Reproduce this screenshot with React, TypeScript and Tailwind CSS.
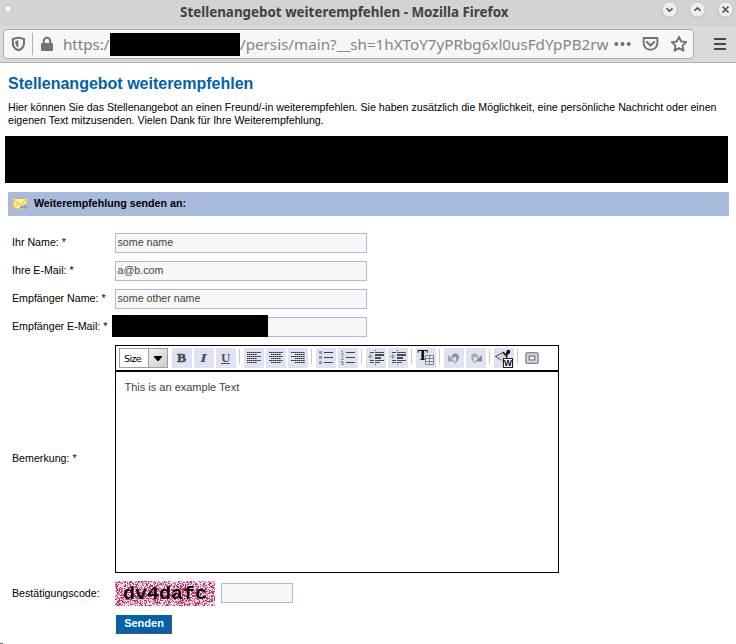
import React from "react";

const sans = "font-['Liberation_Sans',Arial,sans-serif]";

function TitleBar() {
  return (
    <div className="flex h-[26px] items-center bg-[#d3d3d3] pl-[4px] pr-[2px] font-['Noto_Sans',sans-serif]">
      <div className="-mt-2 size-2 shrink-0 rounded-full border border-[#c2c2c2] bg-[#f8f8f8]" />
      <div className="min-w-0 flex-1 pl-[14px]">
        <svg width="640" height="24" className="block overflow-visible">
          <text x="154" y="16" fontSize="15" fontWeight="700" textLength="328.5" lengthAdjust="spacingAndGlyphs" fill="#414141">
            Stellenangebot weiterempfehlen - Mozilla Firefox
          </text>
        </svg>
      </div>
      <div className="-mt-[7px] flex shrink-0 gap-[11px]">
        {["M5.5 7.2 8.5 10.2 11.5 7.2", "M5.5 9.8 8.5 6.8 11.5 9.8", "M5.5 5.5 11.5 11.5M11.5 5.5 5.5 11.5"].map((d) => (
          <svg key={d} width="17" height="18" viewBox="0 0 17 18">
            <circle cx="8.5" cy="9.4" r="8" fill="#c0c0c0" />
            <circle cx="8.5" cy="8.5" r="7.7" fill="#eee" stroke="#bbb" strokeWidth=".8" />
            <path d={d} fill="none" stroke="#4b4b4b" strokeWidth="1.6" />
          </svg>
        ))}
      </div>
    </div>
  );
}

function NavBar() {
  return (
    <div className="flex h-[37px] items-center border-b border-[#b1b1b1] bg-[#dadada] pb-[1px] pl-[3px] font-['Noto_Sans',sans-serif]">
      <div className="mt-[1px] flex h-[30px] w-[691px] shrink-0 items-center rounded-[4px] border border-[#adadad] bg-[#f7f7f7]">
        <svg width="15" height="16" viewBox="0 0 15 16" className="ml-[7px] shrink-0" fill="none">
          <path d="M7.4 1.6 13 3v4.2c0 3.5-2.1 5.8-5.6 7.1C3.9 13 1.8 10.7 1.8 7.2V3z" stroke="#6f6f6f" strokeWidth="2" strokeLinejoin="round" />
          <path d="M7.4 4.2v7.3C5.5 10.5 4.4 9.2 4.4 7V5z" fill="#6f6f6f" />
        </svg>
        <div className="ml-[6px] h-[22px] w-px shrink-0 bg-[#b4b4b4]" />
        <svg width="12" height="16" viewBox="0 0 12 16" className="ml-2 shrink-0" fill="none">
          <rect y="7" width="12" height="8" rx="1.2" fill="#737373" />
          <path d="M2.8 8V4.9a3.2 3.2 0 0 1 6.4 0V8" stroke="#737373" strokeWidth="2.1" />
        </svg>
        <svg width="548" height="28" className="ml-[10px] block shrink-0">
          <text x="0" y="19.5" fontSize="15.3" fill="#808080" textLength="46.5" lengthAdjust="spacingAndGlyphs">https:/</text>
          <rect x="47" y="3" width="130" height="23" fill="#000" />
          <text x="177" y="19.5" fontSize="15.3" fill="#858585" textLength="368.5" lengthAdjust="spacingAndGlyphs">/persis/main?__sh=1hXToY7yPRbg6xl0usFdYpPB2rw</text>
        </svg>
        <svg width="18" height="6" viewBox="0 0 18 6" className="ml-[3px] shrink-0" fill="#717171">
          <circle cx="2.3" cy="3" r="2" /><circle cx="8.5" cy="3" r="2" /><circle cx="14.7" cy="3" r="2" />
        </svg>
        <svg width="17" height="16" viewBox="0 0 17 16" className="ml-[10px] shrink-0" fill="none" stroke="#717171" strokeWidth="1.9">
          <path d="M1.6 2h13.8v5.3a6.9 6.5 0 0 1-13.8 0z" strokeLinejoin="round" />
          <path d="m4.8 6 3.7 3.6L12.2 6" strokeWidth="2.1" strokeLinecap="round" />
        </svg>
        <svg width="18" height="18" viewBox="0 0 18 18" className="ml-[11px] shrink-0" fill="none" stroke="#717171" strokeWidth="1.9" strokeLinejoin="round">
          <path d="m9 1.8 2.2 4.7 5.1.6-3.8 3.5 1 5.1L9 13.2l-4.5 2.5 1-5.1-3.8-3.5 5.1-.6z" />
        </svg>
      </div>
      <div className="ml-5 flex flex-col gap-[3px]">
        <div className="h-[2px] w-3 bg-[#474747]" />
        <div className="h-[2px] w-3 bg-[#474747]" />
        <div className="h-[2px] w-3 bg-[#474747]" />
      </div>
    </div>
  );
}

function MailIcon() {
  return (
    <svg width="15" height="12" viewBox="0 0 15 12">
      <rect x=".5" y=".5" width="13" height="10" fill="#ffec8c" stroke="#f0c060" />
      <path d="M1 1.5 7 7l6-5.500M1 10l4-4.500M13 10 9 5.500" fill="none" stroke="#e5b04f" strokeWidth=".9" />
      <path d="M1 1h12L7 6z" fill="#fff3b0" />
      <path d="M1 .5h12" stroke="#e8a850" />
      <path d="M7 8h4V5.700L14.800 9 11 12v-2H7z" fill="#86a5b8" />
    </svg>
  );
}

function Field({ label, value, redacted }: { label: string; value: string; redacted?: boolean }) {
  return (
    <div className="flex h-7 items-center">
      <label className="w-[103px] shrink-0 whitespace-nowrap pb-[1px]">{label}</label>
      <div className="relative flex h-5 w-[252px] items-center border border-[#a9bbdd] bg-[#f7f7f7] pb-[1px] pl-[1.5px] text-[#444]">
        {value}
        {redacted && <div className="absolute -left-[4px] -top-[3px] h-[22px] w-[156px] bg-black" />}
      </div>
    </div>
  );
}

function Tool({ children, plain }: { children: React.ReactNode; plain?: boolean }) {
  return (
    <div className={plain ? "size-5 shrink-0" : "size-5 shrink-0 bg-[#dfe2f3]"}>
      <svg width="20" height="20" viewBox="0 0 20 20" className="block overflow-visible">{children}</svg>
    </div>
  );
}

function Sep() {
  return <div className="ml-px mr-[2px] mt-[1px] h-[15px] w-px shrink-0 bg-[#cacaca]" />;
}

function Align({ mode }: { mode: "left" | "center" | "right" }) {
  const offset = mode === "left" ? 0 : mode === "center" ? 2 : 4;
  return (
    <Tool>
      {[0, 1, 2, 3, 4, 5].map((i) => {
        const short = i % 2 === 1;
        const x = 3 + (short ? offset : 0);
        const w = short ? 10 : 14;
        return (
          <g key={i} shapeRendering="crispEdges">
            <rect x={x} y={4 + i * 2} width={w} height="1" fill="#777" />
            <path d={`M${x} ${4.5 + i * 2}h${w}`} stroke="#2c2c2c" strokeDasharray="1 1" />
          </g>
        );
      })}
    </Tool>
  );
}

function Indent({ out }: { out?: boolean }) {
  return (
    <Tool>
      <g fill="#4b4b4b" shapeRendering="crispEdges">
        <path d="M4 4h4v1H4zM9 4h9v1H9zM9 6h9v2H9zM9 9h6v2H9zM4 12h4v1H4zM9 12h9v1H9zM4 14h4v1H4zM9 14h5v1H9zM9 2h1v1H9zM9 16h1v1H9z" />
        <path d={out ? "M2 8h1V7h1V6h1v2h2v1H5v2H4v-1H3V9H2z" : "M2 8h2V6h1v1h1v1h1v1H6v1H5v1H4V9H2z"} fill="#999" />
      </g>
    </Tool>
  );
}

function Undo({ flip }: { flip?: boolean }) {
  return (
    <Tool>
      <g transform={flip ? "translate(20 0) scale(-1 1)" : undefined}>
        <path d="M7.500 9C9 4.500 14.500 4.500 14.500 9c0 2.500-1.500 4.500-4 6.500C12 13 13 11 12.500 9.500 12 7.500 10 8 9 10z" fill={flip ? "#aaa" : "#8c8c8c"} stroke={flip ? "#aaa" : "#8c8c8c"} strokeWidth=".6" />
        <path d="M4 7v6.500h7z" fill={flip ? "#8b8b8b" : "#a0a0a0"} />
      </g>
    </Tool>
  );
}

function Toolbar() {
  return (
    <div className="flex h-[26px] gap-[2px] border-b-2 border-black pl-[3px] pt-[2px]">
      <div className="mr-[2px] flex h-5 w-[49px] shrink-0 border border-[#a0a0a0] text-black">
        <div className="flex w-7 items-center pl-[4px] pt-px font-['DejaVu_Sans',sans-serif] text-[9.5px] tracking-[-0.6px]">Size</div>
        <div className="flex flex-1 items-center justify-center border-l border-[#a0a0a0] bg-gradient-to-br from-[#f5f5f5] to-[#c9c9d0] pr-px pt-px">
          <svg width="8" height="5"><path d="M0 0h8v1L4.500 5h-1L0 1z" fill="#000" /></svg>
        </div>
      </div>
      <Tool><text x="5" y="14" fontFamily="Liberation Serif, serif" fontWeight="700" fontSize="13.5" fill="#484848" stroke="#484848" strokeWidth=".5">B</text></Tool>
      <Tool><text x="6" y="14" fontFamily="Liberation Serif, serif" fontWeight="700" fontStyle="italic" fontSize="13.5" textLength="7" lengthAdjust="spacingAndGlyphs" fill="#505050">I</text></Tool>
      <Tool>
        <text x="5" y="13.5" fontFamily="Liberation Serif, serif" fontWeight="700" fontSize="13" fill="#505050">U</text>
        <rect x="5" y="15" width="9" height="1" fill="#505050" />
      </Tool>
      <Sep />
      <Align mode="left" /><Align mode="center" /><Align mode="right" />
      <Sep />
      <Tool>
        <path d="M3 3h3v3H3zM3 8h3v3H3zM3 13h3v3H3z" fill="#999" />
        <path d="M8 4h9v1H8zM8 9h9v1H8zM8 14h9v1H8z" fill="#444" />
      </Tool>
      <Tool>
        <path d="M4 2h1v4h1v1H3V6h1V4H3V3h1zM3 8h2v1h1v1H5v1h1v1H3v-1h1v-1h1V9H3zM3 13h2v1h1v1H5v1h1v1H3v-1h1v-1H3z" fill="#999" />
        <path d="M8 4h9v1H8zM8 9h9v1H8zM8 14h9v1H8z" fill="#444" />
      </Tool>
      <Sep />
      <Indent out /><Indent />
      <Sep />
      <Tool>
        <text x="1.5" y="12" fontFamily="Liberation Serif, serif" fontWeight="700" fontSize="15.5" fill="#000">T</text>
        <path d="M9.500 7.500h8v9h-8zM9.500 10.500h8M9.500 13.500h8M13.500 7.500v9" fill="#e8eaf5" stroke="#858585" />
      </Tool>
      <Sep />
      <Undo /><Undo flip />
      <Sep />
      <Tool>
        <path d="M1.500 8.500 9 4.500l4 4.500-3 5z" fill="#c4c4c4" stroke="#444" />
        <path d="m3 9 6-3M5 11l5-3M7 13l4-4" stroke="#f4f4f4" />
        <path d="m9 4 4.500 5" stroke="#222" strokeWidth="1.4" />
        <path d="M13 2h3v3l-3 2.500L11.500 6z" fill="#111" />
        <rect x="9.500" y="10.500" width="9" height="9" fill="#fff" stroke="#222" />
        <text x="10" y="18" fontFamily="Liberation Sans, sans-serif" fontWeight="700" fontSize="8.5" textLength="8" lengthAdjust="spacingAndGlyphs">W</text>
      </Tool>
      <Sep />
      <Tool plain>
        <rect x="4" y="4.700" width="12" height="10.600" rx="1.500" fill="#dcdfe6" stroke="#878d98" strokeWidth="1.600" />
        <rect x="7.200" y="8" width="5.600" height="4" fill="#f4f6fa" stroke="#737b8b" strokeWidth="1.300" />
      </Tool>
    </div>
  );
}

// Deterministic speckles, so that the captcha background is stable between renders.
function speckles() {
  let seed = 48271;
  const rand = () => {
    seed = (seed * 16807) % 2147483647;
    return seed / 2147483647;
  };
  let d = "";
  for (let y = 0; y < 25; y++) {
    for (let x = 0; x < 100; x++) {
      const edge = Math.abs(y - 14) / 14;
      if (rand() < 0.48 - edge * 0.12) d += `M${x} ${y}h1v1h-1z`;
    }
  }
  return d;
}

function Captcha() {
  return (
    <svg width="100" height="25" viewBox="0 0 100 25" className="block shrink-0">
      <rect width="100" height="25" fill="#ead9ec" />
      <path d={speckles()} fill="#b93c66" shapeRendering="crispEdges" />
      <text x="8" y="18" fontFamily="Liberation Mono, monospace" fontWeight="700" fontSize="18.5" textLength="84" lengthAdjust="spacingAndGlyphs" fill="#17060c">dv4dafc</text>
    </svg>
  );
}

export default function App() {
  return (
    <div className={`flex h-[644px] w-[736px] flex-col overflow-hidden bg-white text-[10.667px] leading-[13px] text-black ${sans}`}>
      <TitleBar />
      <NavBar />
      <main className="flex-1 pl-2 pr-[7px]">
        <h1 className="pt-[11px] text-[16px] font-bold leading-[20px] text-[#0062ac]">Stellenangebot weiterempfehlen</h1>
        <p className="mt-[7px] whitespace-nowrap">
          Hier können Sie das Stellenangebot an einen Freund/-in weiterempfehlen. Sie haben zusätzlich die Möglichkeit, eine persönliche Nachricht oder einen
          <br />
          eigenen Text mitzusenden. Vielen Dank für Ihre Weiterempfehlung.
        </p>
        <div className="-ml-[3px] mt-[9px] h-[47px] w-[723px] bg-black" />
        <div className="mt-[9px] flex h-6 items-center bg-[#a9bbdd] pb-[1px] pl-[5px] font-bold">
          <MailIcon />
          <span className="ml-[6px]">Weiterempfehlung senden an:</span>
        </div>
        <form className="pl-1 pt-[13px]">
          <Field label="Ihr Name: *" value="some name" />
          <Field label="Ihre E-Mail: *" value="a@b.com" />
          <Field label="Empfänger Name: *" value="some other name" />
          <Field label="Empfänger E-Mail: *" value="" redacted />
          <div className="mt-1 flex items-center">
            <label className="w-[103px] shrink-0 pb-[2px]">Bemerkung: *</label>
            <div className="h-[228px] w-[444px] border border-black">
              <Toolbar />
              <div className="pl-[8.5px] pt-[9px] text-[11px] text-[#444]">This is an example Text</div>
            </div>
          </div>
          <div className="mt-2 flex h-[25px] items-center">
            <label className="w-[103px] shrink-0">Bestätigungscode:</label>
            <Captcha />
            <div className="-mt-[1px] ml-[6px] h-5 w-[72px] border border-[#a9bbdd] bg-[#f7f7f7]" />
          </div>
          <div className="ml-[103px] mt-[9px] flex h-[19px] w-[57px] items-center justify-center border-b border-l border-r border-b-[#555] border-l-white border-r-[#555] bg-[#0062ac] pb-[1px] pl-[1px] text-[11px] font-bold text-white">
            Senden
          </div>
        </form>
      </main>
      <div className="h-px w-[3px] shrink-0 bg-[#6b6b6b]" />
    </div>
  );
}
